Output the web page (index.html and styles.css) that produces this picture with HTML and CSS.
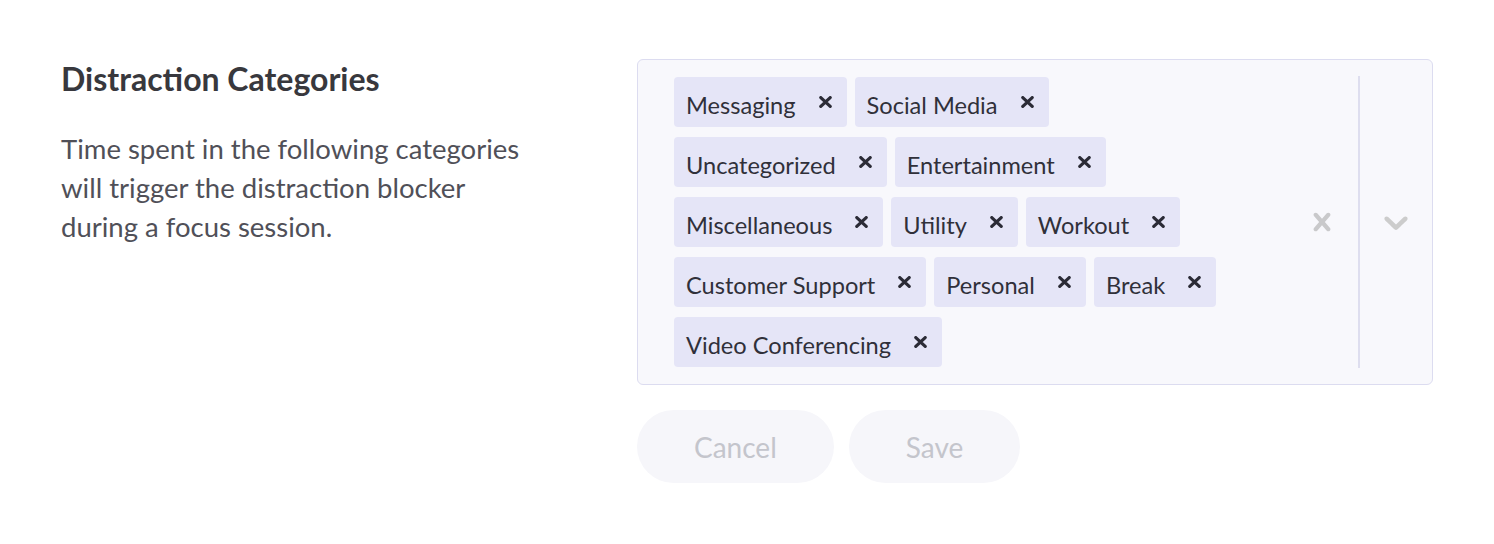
FILE: index.html
```html
<!DOCTYPE html>
<html lang="en">
<head>
<meta charset="utf-8">
<title>Distraction Categories</title>
<link rel="stylesheet" href="styles.css">
</head>
<body>
<div class="page">
  <div class="info">
    <h2 class="title">Distraction Categories</h2>
    <p class="desc">Time spent in the following categories will trigger the distraction blocker during a focus session.</p>
  </div>
  <div class="field">
    <div class="select">
      <div class="values">
        <div class="chip"><span class="chip-label">Messaging</span><span class="chip-remove"><svg viewBox="0 0 13 12" width="13" height="12"><path d="M1.8 1.6 L11.2 10.4 M11.2 1.6 L1.8 10.4" /></svg></span></div>
        <div class="chip"><span class="chip-label">Social Media</span><span class="chip-remove"><svg viewBox="0 0 13 12" width="13" height="12"><path d="M1.8 1.6 L11.2 10.4 M11.2 1.6 L1.8 10.4" /></svg></span></div>
        <div class="chip"><span class="chip-label">Uncategorized</span><span class="chip-remove"><svg viewBox="0 0 13 12" width="13" height="12"><path d="M1.8 1.6 L11.2 10.4 M11.2 1.6 L1.8 10.4" /></svg></span></div>
        <div class="chip"><span class="chip-label">Entertainment</span><span class="chip-remove"><svg viewBox="0 0 13 12" width="13" height="12"><path d="M1.8 1.6 L11.2 10.4 M11.2 1.6 L1.8 10.4" /></svg></span></div>
        <div class="chip"><span class="chip-label">Miscellaneous</span><span class="chip-remove"><svg viewBox="0 0 13 12" width="13" height="12"><path d="M1.8 1.6 L11.2 10.4 M11.2 1.6 L1.8 10.4" /></svg></span></div>
        <div class="chip"><span class="chip-label">Utility</span><span class="chip-remove"><svg viewBox="0 0 13 12" width="13" height="12"><path d="M1.8 1.6 L11.2 10.4 M11.2 1.6 L1.8 10.4" /></svg></span></div>
        <div class="chip"><span class="chip-label">Workout</span><span class="chip-remove"><svg viewBox="0 0 13 12" width="13" height="12"><path d="M1.8 1.6 L11.2 10.4 M11.2 1.6 L1.8 10.4" /></svg></span></div>
        <div class="chip"><span class="chip-label">Customer Support</span><span class="chip-remove"><svg viewBox="0 0 13 12" width="13" height="12"><path d="M1.8 1.6 L11.2 10.4 M11.2 1.6 L1.8 10.4" /></svg></span></div>
        <div class="chip"><span class="chip-label">Personal</span><span class="chip-remove"><svg viewBox="0 0 13 12" width="13" height="12"><path d="M1.8 1.6 L11.2 10.4 M11.2 1.6 L1.8 10.4" /></svg></span></div>
        <div class="chip"><span class="chip-label">Break</span><span class="chip-remove"><svg viewBox="0 0 13 12" width="13" height="12"><path d="M1.8 1.6 L11.2 10.4 M11.2 1.6 L1.8 10.4" /></svg></span></div>
        <div class="chip"><span class="chip-label">Video Conferencing</span><span class="chip-remove"><svg viewBox="0 0 13 12" width="13" height="12"><path d="M1.8 1.6 L11.2 10.4 M11.2 1.6 L1.8 10.4" /></svg></span></div>
      </div>
      <div class="indicators">
        <div class="indicator">
          <svg class="ind-icon clear-icon" viewBox="0 0 20 20" width="36" height="36"><path d="M14.348 14.849c-0.469 0.469-1.229 0.469-1.697 0l-2.651-3.030-2.651 3.029c-0.469 0.469-1.229 0.469-1.697 0-0.469-0.469-0.469-1.229 0-1.697l2.758-3.15-2.759-3.152c-0.469-0.469-0.469-1.228 0-1.697s1.228-0.469 1.697 0l2.652 3.031 2.651-3.031c0.469-0.469 1.228-0.469 1.697 0s0.469 1.229 0 1.697l-2.758 3.152 2.758 3.15c0.469 0.469 0.469 1.229 0 1.698z"/></svg>
        </div>
        <span class="separator"></span>
        <div class="indicator">
          <svg class="ind-icon" viewBox="0 0 20 20" width="40" height="40"><path d="M4.516 7.548c0.436-0.446 1.043-0.481 1.576 0l3.908 3.747 3.908-3.747c0.533-0.481 1.141-0.446 1.574 0 0.436 0.445 0.408 1.197 0 1.615-0.406 0.418-4.695 4.502-4.695 4.502-0.217 0.223-0.502 0.335-0.787 0.335s-0.57-0.112-0.789-0.335c0 0-4.287-4.084-4.695-4.502s-0.436-1.170 0-1.615z"/></svg>
        </div>
      </div>
    </div>
    <div class="actions">
      <button class="btn" disabled>Cancel</button>
      <button class="btn" disabled>Save</button>
    </div>
  </div>
</div>
</body>
</html>
```
FILE: styles.css
```css
html, body {
  margin: 0;
  padding: 0;
  background: #ffffff;
}

body {
  font-family: Lato, "Noto Sans", "Liberation Sans", sans-serif;
  color: #3a3a40;
}

.page {
  display: grid;
  grid-template-columns: 576px 796px;
  padding: 59px 61px 0 61px;
}

.info {
  display: flex;
  flex-direction: column;
}

.title {
  margin: 1px 0 0 0;
  font-size: 32px;
  line-height: 38px;
  font-weight: 700;
  color: #38383d;
}

.desc {
  margin: 31px 0 0 0;
  max-width: 470px;
  font-size: 27.5px;
  line-height: 39px;
  font-weight: 400;
  color: #505058;
}

.field {
  display: flex;
  flex-direction: column;
}

.select {
  display: flex;
  align-items: stretch;
  background: #f8f8fc;
  border: 1px solid #dcdcf0;
  border-radius: 6px;
}

.values {
  flex: 1;
  display: flex;
  flex-wrap: wrap;
  align-content: flex-start;
  padding: 12px 40px 12px 32px;
}

.chip {
  display: flex;
  align-items: center;
  height: 50px;
  margin: 5px 4px;
  background: #e5e5f7;
  border-radius: 4px;
}

.chip-label {
  padding: 6px 0 0 12px;
  font-size: 23.6px;
  line-height: 38px;
  color: #30303a;
  white-space: nowrap;
}

.chip-remove {
  display: flex;
  align-items: center;
  padding: 0 15px 0 23px;
}

.chip-remove svg path {
  fill: none;
  stroke: #2b2b36;
  stroke-width: 3.2;
  stroke-linecap: round;
}

.indicators {
  display: flex;
  align-items: stretch;
}

.indicator {
  width: 72px;
  display: flex;
  align-items: center;
  justify-content: center;
}

.ind-icon {
  fill: #cccccc;
}

.clear-icon {
  fill: #c9c9cb;
}

.separator {
  width: 2px;
  margin: 16px 0;
  background: #dedeef;
}

.actions {
  display: flex;
  gap: 15px;
  margin-top: 25px;
}

.btn {
  height: 73px;
  padding: 0 57px;
  border: none;
  border-radius: 37px;
  background: #f6f6fa;
  font-family: Lato, "Noto Sans", "Liberation Sans", sans-serif;
  font-size: 28px;
  color: #c4c5cc;
  cursor: default;
}
```
